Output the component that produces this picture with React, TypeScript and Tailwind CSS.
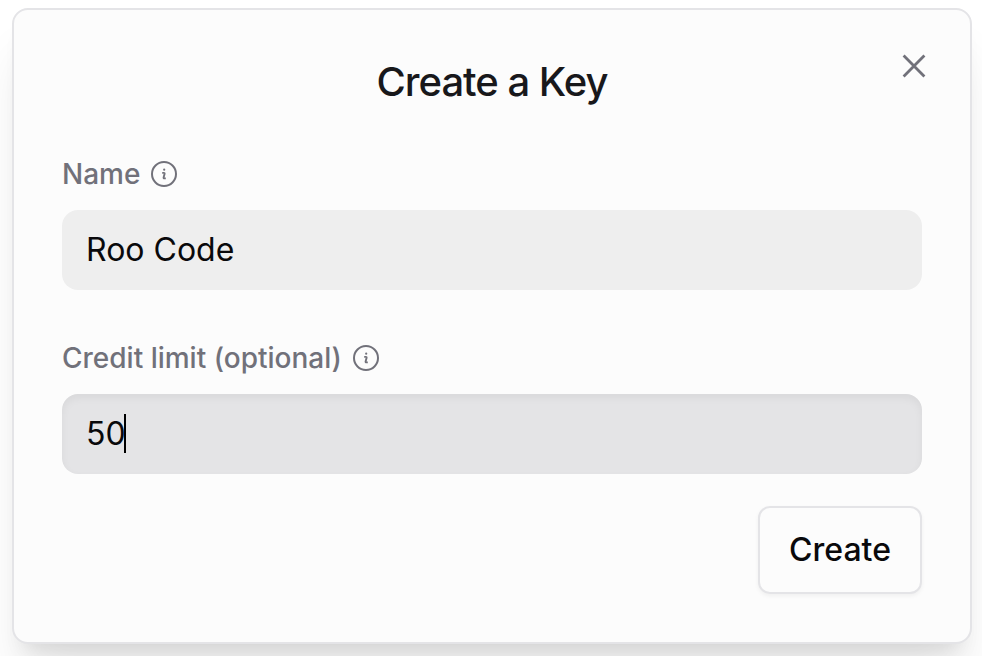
import React from "react";

function InfoIcon() {
  return (
    <svg className="shrink-0" width="28" height="28" viewBox="0 0 28 28" fill="none" stroke="#71717a" strokeWidth="2">
      <circle cx="14" cy="14" r="12" />
      <path d="M12.2 12.9h1.7c.5 0 .8.4.7.9l-1 3.6c-.1.6.2 1 .7 1h1.5" strokeWidth="1.9" />
      <circle cx="14.2" cy="9.7" r="1.1" fill="#71717a" stroke="none" />
    </svg>
  );
}

export default function App() {
  return (
    <main className="h-[656px] w-[982px] overflow-hidden bg-white pl-3 pt-2 font-['Inter',sans-serif]">
      <section className="h-[636px] w-[960px] rounded-[16px] border-2 border-[#e4e4e7] bg-[#fcfcfc] px-[48px] pt-[46px] shadow-[0_40px_50px_-10px_rgba(0,0,0,0.1),0_16px_20px_-12px_rgba(0,0,0,0.1)]">
        <header className="flex h-[56px]">
          <h1 className="w-[860px] shrink-0 pt-[2px] text-center text-[40px] font-medium leading-[48px] tracking-[-1px] text-[#18181b]">Create a Key</h1>
          <svg className="-ml-[22px] -mt-[4px] shrink-0" width="28" height="28" viewBox="0 0 28 28" stroke="#71717a" strokeWidth="2.8" fill="none">
            <path d="M3.6 3.6l20.8 20.8M24.4 3.6L3.6 24.4" />
          </svg>
        </header>
        <div className="mt-[42px] flex h-[40px] items-center gap-[10px]">
          <label className="text-[28px] font-medium leading-[40px] text-[#71717a]">Name</label>
          <InfoIcon />
        </div>
        <div className="mt-[16px] flex h-20 items-center rounded-[16px] bg-[#eeeeee] px-6 text-[32px] text-[#09090b]">Roo Code</div>
        <div className="mt-[48px] flex h-[40px] items-center gap-[10px]">
          <label className="text-[28px] font-medium leading-[40px] text-[#71717a]">Credit limit (optional)</label>
          <InfoIcon />
        </div>
        <div className="mt-[16px] flex h-20 items-center rounded-[16px] bg-[#e4e4e6] px-6 text-[32px] text-[#09090b] shadow-[inset_0_4px_8px_rgba(0,0,0,0.05)]">
          <span>50</span><span className="-ml-[2px] mb-px h-[39px] w-[2px] bg-black" />
        </div>
        <div className="mt-8 flex justify-end">
          <button className="h-[88px] w-[164px] rounded-[12px] border-2 border-[#e4e4e7] bg-[#fcfcfc] text-[32px] font-medium text-[#09090b] shadow-[0_2px_4px_rgba(0,0,0,0.05)]">Create</button>
        </div>
      </section>
    </main>
  );
}
